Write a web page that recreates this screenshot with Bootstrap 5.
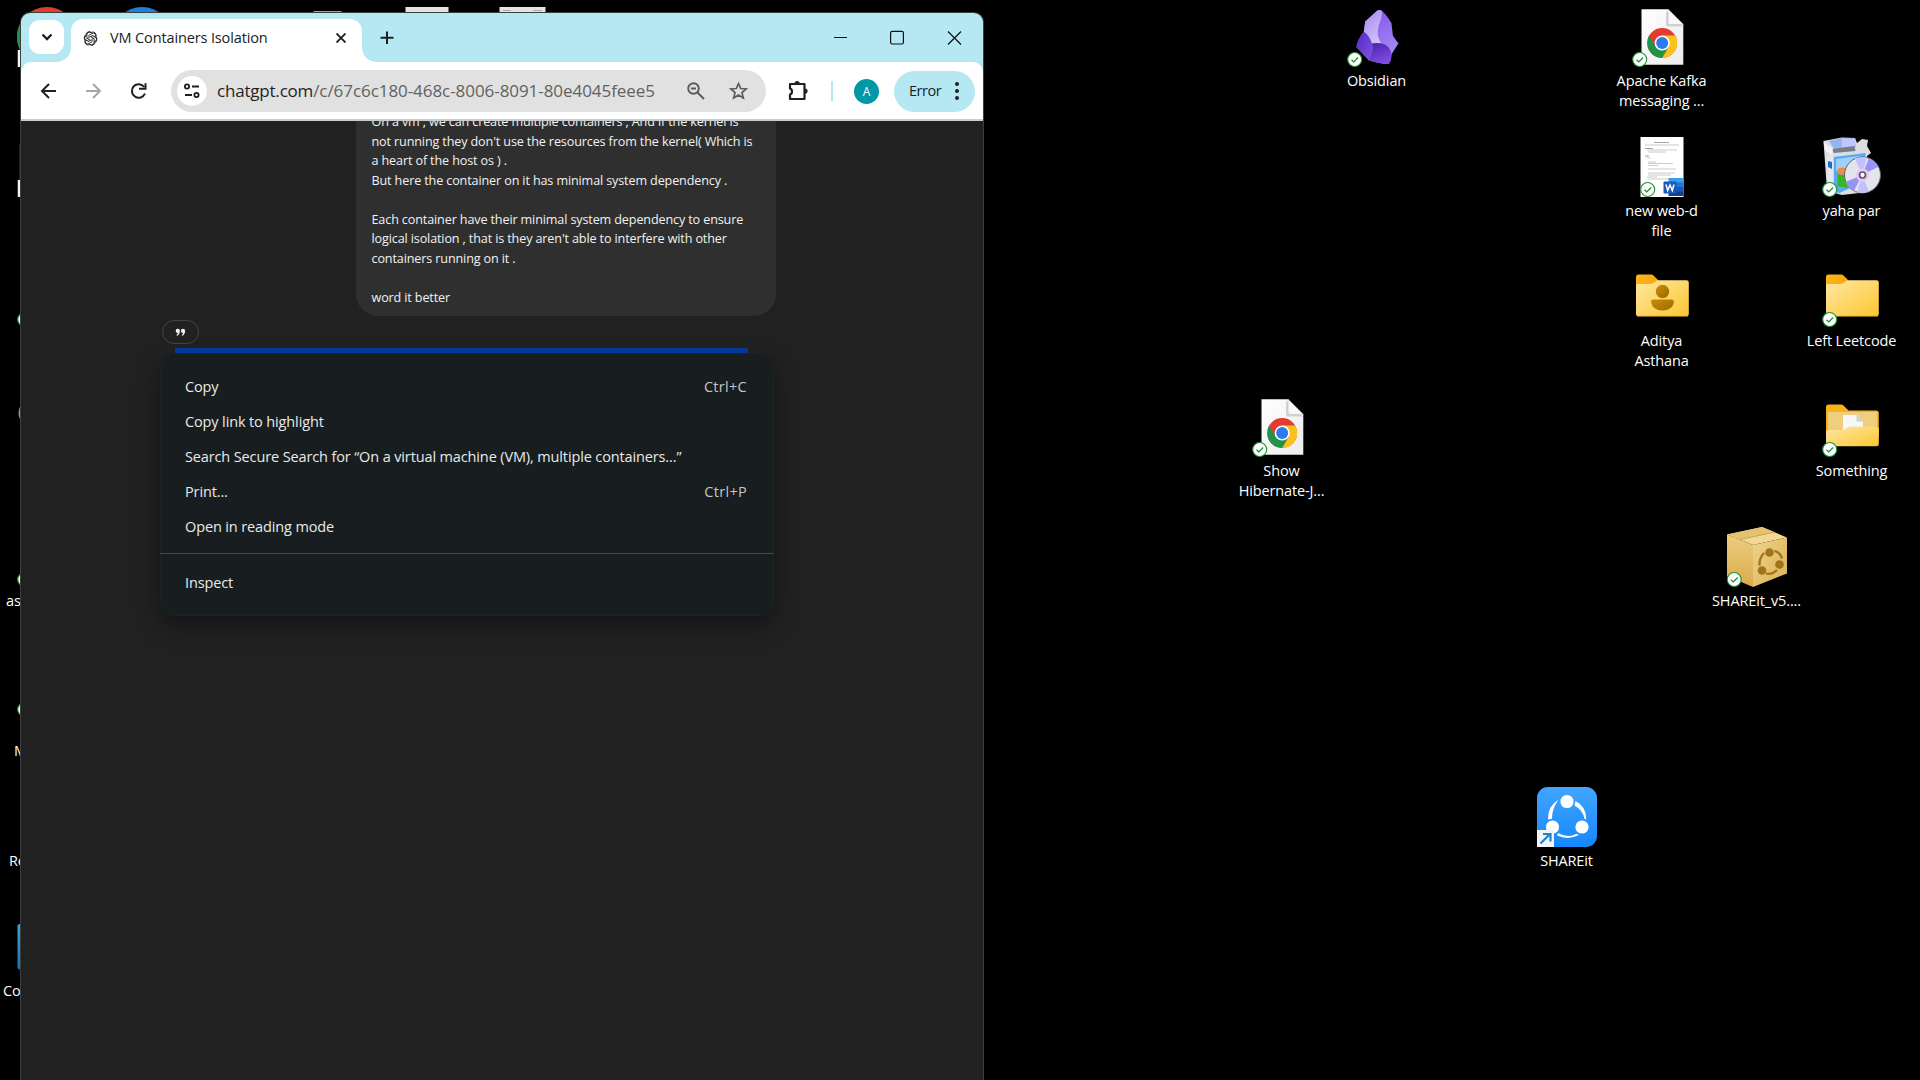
<!DOCTYPE html>
<html lang="en">
<head>
<meta charset="utf-8">
<title>Desktop</title>
<link rel="stylesheet" href="https://cdn.jsdelivr.net/npm/bootstrap@5.3.0/dist/css/bootstrap.min.css">
<style>
  html, body { height: 100%; }
  body { background: #000; font-family: "Open Sans", "Noto Sans", sans-serif; font-size: 14.5px; letter-spacing: -.13px; width: 1920px; height: 1080px; }
  svg { display: block; flex: none; }

  /* desktop grid: 95px by 130px cells */
  .desk-grid { display: grid; grid-template-columns: repeat(20, 95px); grid-template-rows: repeat(8, 130px); margin-left: -1px; padding-top: 7px; color: #fff; height: 1080px; }
  .desk-icon { display: flex; flex-direction: column; align-items: center; text-align: center; line-height: 20px; white-space: nowrap; }
  .desk-icon > svg { width: 60px; height: 60px; overflow: visible; margin-bottom: 4px; }
  .cut-label { align-self: flex-start; }
  .pad-as { padding-left: 7px; } .pad-m { padding: 20px 0 0 15px; } .pad-re { padding-left: 10px; } .pad-co { padding-left: 4px; }
  .c0{grid-column:1}.c1{grid-column:2}.c3{grid-column:4}.c4{grid-column:5}.c5{grid-column:6}
  .c13{grid-column:14}.c14{grid-column:15}.c16{grid-column:17}.c17{grid-column:18}.c18{grid-column:19}.c19{grid-column:20}
  .r0{grid-row:1}.r1{grid-row:2}.r2{grid-row:3}.r3{grid-row:4}.r4{grid-row:5}.r5{grid-row:6}.r6{grid-row:7}.r7{grid-row:8}

  /* browser window */
  .browser { left: 20px; top: 12px; width: 964px; height: 1068px; background: #212121; border: 1px solid #3c3f40; border-bottom: 0; border-radius: 10px 10px 0 0; }
  .tabstrip { background: #b5e8f3; height: 49px; flex: none; padding: 7px 0 0 8px; }
  .tab-search { width: 35px; height: 34px; border-radius: 11px; }
  .active-tab { position: relative; width: 291px; height: 43px; margin: -1px 0 0 7px; border-radius: 12px 12px 0 0; padding: 0 12px 5px 12px; color: #202124; }
  .active-tab::before, .active-tab::after { content: ""; position: absolute; bottom: 0; width: 14px; height: 14px; }
  .active-tab::before { left: -14px; background: radial-gradient(circle at 0 0, transparent 13.5px, #fff 14px); }
  .active-tab::after { right: -14px; background: radial-gradient(circle at 100% 0, transparent 13.5px, #fff 14px); }
  .caption-btns { margin-right: 1px; }
  .toolbar-wrap { background: #b5e8f3; flex: none; }
  .toolbar { background: #fff; height: 59px; border-bottom: 2px solid #c9cdcd; border-radius: 10px 10px 0 0; padding: 8px 8px 7px 16px; }
  .omnibox { width: 595px; height: 42px; margin-left: 20px; border-radius: 21px; background: #e1e1e1; padding: 0 18px 0 6px; }
  .site-info { width: 30px; height: 30px; border-radius: 50%; }
  .url { font-size: 17px; letter-spacing: -.06px; color: #5f6163; margin-left: 10px; }
  .url b { font-weight: 400; color: #1f1f1f; letter-spacing: -.2px; }
  .tool-divider { width: 2px; height: 20px; background: #b5e8f3; margin: 0 21px 0 20px; }
  .avatar { width: 25px; height: 25px; border-radius: 50%; background: #0097a7; color: #fff; font-size: 12px; line-height: 25px; margin-right: 15px; }
  .error-pill { width: 81px; height: 41px; border-radius: 21px; background: #b5e8f3; color: #202124; padding: 0 16px 0 15px; letter-spacing: -.45px; }

  /* page */
  .chat-page { padding-left: 141px; }
  .message { width: 420px; height: 195px; margin-left: 193.500px; border-radius: 0 0 22px 22px; background: #2f2f2f; color: #f2f2f2; font-size: 12.6px; line-height: 19.5px; padding: 0 16px 9px; white-space: pre; }
  .quote-btn { width: 37px; height: 24px; margin-top: 4px; border: 1px solid #444; border-radius: 12px; background: #212121; }
  .selection { width: 573px; height: 8px; margin: 3.5px 0 0 13px; background: #063a9f; }
  .ctx-menu { left: 139px; top: 340px; width: 614px; height: 263px; border-radius: 15px; box-shadow: 0 0 0 1px #1d2224 inset, 0 10px 22px rgba(0,0,0,.38); background: #181d1f; color: #e8eaea; padding: 16px 0; }
  .ctx-item { height: 35px; padding: 0 27px 0 25px; }
  .ctx-rule { height: 1px; background: #3e4f52; margin: 9px 0 11px; }
  .shortcut { color: #c3c7c7; letter-spacing: .3px; }
</style>
<script src="https://cdn.jsdelivr.net/npm/bootstrap@5.3.0/dist/js/bootstrap.bundle.min.js"></script>
</head>
<body class="position-relative overflow-hidden">

<svg width="0" height="0" class="position-absolute">
  <defs>
    <linearGradient id="fold" x1="0" y1="0" x2="1" y2="1"><stop offset="0" stop-color="#ffe7a2"/><stop offset="1" stop-color="#fdc732"/></linearGradient>
    <linearGradient id="foldTab" x1="0" y1="0" x2="1" y2="0"><stop offset="0" stop-color="#fcb51a"/><stop offset="1" stop-color="#f5a80c"/></linearGradient>
    <linearGradient id="person" x1="0" y1="0" x2="1" y2="1"><stop offset="0" stop-color="#c98f05"/><stop offset="1" stop-color="#9c6900"/></linearGradient>
    <linearGradient id="share" x1="0" y1="0" x2="0" y2="1"><stop offset="0" stop-color="#42a5ff"/><stop offset="1" stop-color="#1687fb"/></linearGradient>
    <linearGradient id="obsA" x1="0" y1="0" x2=".6" y2="1"><stop offset="0" stop-color="#a286ef"/><stop offset="1" stop-color="#cfc0fa"/></linearGradient>
    <linearGradient id="obsB" x1="0" y1="0" x2=".5" y2="1"><stop offset="0" stop-color="#7849e8"/><stop offset="1" stop-color="#a68cf3"/></linearGradient>
    <linearGradient id="obsC" x1="0" y1="0" x2="1" y2="1"><stop offset="0" stop-color="#5727c4"/><stop offset="1" stop-color="#7d53e0"/></linearGradient>
    <linearGradient id="obsD" x1="0" y1="0" x2=".4" y2="1"><stop offset="0" stop-color="#4c20a8"/><stop offset="1" stop-color="#7c4be0"/></linearGradient>
    <linearGradient id="paper" x1="0" y1="0" x2="1" y2="1"><stop offset="0" stop-color="#fff"/><stop offset="1" stop-color="#ececec"/></linearGradient>
    <linearGradient id="teal" x1="0" y1="0" x2="0" y2="1"><stop offset="0" stop-color="#3aa6cc"/><stop offset="1" stop-color="#1473bf"/></linearGradient>
    <linearGradient id="boxL" x1="0" y1="0" x2="0" y2="1"><stop offset="0" stop-color="#edcd80"/><stop offset="1" stop-color="#d9ab4c"/></linearGradient>
    <linearGradient id="boxR" x1="0" y1="0" x2="1" y2="1"><stop offset="0" stop-color="#f0d48a"/><stop offset="1" stop-color="#d8b152"/></linearGradient>
    <symbol id="ok" viewBox="0 0 16 16" width="16" height="16"><circle cx="7.700" cy="8" r="7" fill="#fff" stroke="#1c8f33" stroke-width="1.1"/><path d="M4.500 8.200l2.300 2.200 4.300-4.400" fill="none" stroke="#1c8f33" stroke-width="1.300"/></symbol>
    <symbol id="chrome" viewBox="0 0 30 30">
      <circle cx="15" cy="15" r="15" fill="#e33b2e"/>
      <path d="M2 7.5 A15 15 0 0 0 15 30 L21.5 18.7 L8.5 18.7Z" fill="#219348"/>
      <path d="M28 7.5 A15 15 0 0 1 15 30 L21.5 18.7 L15 7.5Z" fill="#fbc21b"/>
      <circle cx="15" cy="15" r="7.6" fill="#fff"/><circle cx="15" cy="15" r="6" fill="#2a7bee"/>
    </symbol>
    <symbol id="chromeDoc" viewBox="0 0 60 60">
      <path d="M9.500 2.200H36l15.300 15.300V57.800H9.500z" fill="url(#paper)"/>
      <path d="M34 4v13.500q0 2 2 2h15z" fill="#bbb" opacity=".6"/>
      <path d="M36 2.200v13.300q0 2 2 2h13.300z" fill="#f7f7f7" stroke="#bdbdbd" stroke-width=".6"/>
      <use href="#chrome" x="15.200" y="21" width="30" height="30"/>
      <use href="#ok" x="0" y="44.500" width="16" height="16"/>
    </symbol>
    <symbol id="folder" viewBox="0 0 60 60">
      <path d="M4 10q0-2.500 2.500-2.500H19q1.500 0 2.500 1l5 5V22H4z" fill="url(#foldTab)"/>
      <path d="M4 19q0-2 2-2h12q3 0 5-2l1-1q1-.8 2.500-.8H54.500q2.300 0 2.300 2.300V47q0 2.300-2.300 2.300H6.300Q4 49.300 4 47z" fill="url(#fold)"/>
      <path d="M5 49.200h51" stroke="#c99722" stroke-width=".8"/>
    </symbol>
    <symbol id="arrow" viewBox="0 0 17 17"><rect width="17" height="17" fill="#f4f4f4"/><path d="M3.500 13.500l8.500-8.500M6 4h7.500v7.500" fill="none" stroke="#1b83c9" stroke-width="2.200"/></symbol>
  </defs>
</svg>

<main class="desk-grid">
  <div class="desk-icon c0 r0"><svg viewBox="0 0 60 60"><use href="#chrome" width="60" height="60"/><use href="#arrow" x=".500" y="43" width="17" height="17"/></svg></div>
  <div class="desk-icon c1 r0"><svg viewBox="0 0 60 60"><circle cx="30" cy="30" r="30" fill="#1b82dc"/></svg></div>
  <div class="desk-icon c3 r0"><svg viewBox="0 0 60 60"><path d="M11.500 4h28v50h-28z" fill="#a89c9a"/></svg></div>
  <div class="desk-icon c4 r0"><svg viewBox="0 0 60 60"><path d="M8.500 0h43v60h-43z" fill="#e4e4e4"/><path d="M23 5.500h9" stroke="#bbb" stroke-width="1"/></svg></div>
  <div class="desk-icon c5 r0"><svg viewBox="0 0 60 60"><path d="M7.500 0h46v60h-46z" fill="#e4e4e4"/><path d="M11 3.500h8M41 3.500h9" stroke="#aaa"/></svg></div>

  <div class="desk-icon c0 r1"><svg viewBox="0 0 60 60"><rect x="2.500" y="3" width="55" height="54" rx="6" fill="#b7170e"/><use href="#arrow" x=".500" y="43" width="17" height="17"/></svg></div>
  <div class="desk-icon c0 r2"><svg viewBox="0 0 60 60"><use href="#folder" width="60" height="60"/><use href="#ok" x="0" y="44.500"/></svg></div>
  <div class="desk-icon c0 r3"><svg viewBox="0 0 60 60"><circle cx="15" cy="16" r="13.500" fill="#5fa3c2"/></svg></div>
  <div class="desk-icon c0 r4"><svg viewBox="0 0 60 60"><use href="#folder" width="60" height="60"/><use href="#ok" x="0" y="44.500"/></svg><span class="cut-label pad-as">as</span></div>
  <div class="desk-icon c0 r5"><svg viewBox="0 0 60 60"><use href="#ok" x="0" y="44.500"/></svg><span class="cut-label pad-m">M</span></div>
  <div class="desk-icon c0 r6"><svg viewBox="0 0 60 60"></svg><span class="cut-label pad-re">Re</span></div>
  <div class="desk-icon c0 r7"><svg viewBox="0 0 60 60"><rect x=".500" y="7" width="59" height="45.500" rx="2" fill="url(#teal)"/></svg><span class="cut-label pad-co">Co</span></div>

  <div class="desk-icon c14 r0">
    <svg viewBox="0 0 60 60">
      <path d="M16.800 24.700Q9.500 34 9.500 40.300L21.800 53.300Q36 57.500 41 57Q44 56 44.500 47.300L51.500 36.300Q47 31 45.800 28L44.500 16Q38 6 34.500 3.600Q32 2 29.500 4.300L18.200 14.500Z" fill="url(#obsB)"/>
      <path d="M29.500 4.300Q32 2 34.500 3.600Q36 8 32 18Q28.500 28 34 36L25 36.500Q22 29 16.800 24.700L18.200 14.500Z" fill="url(#obsA)"/>
      <path d="M16.800 24.700Q9.500 34 9.500 40.300L21.800 53.300Q27 43 24.500 35.500Q22 28 16.800 24.700Z" fill="url(#obsC)"/>
      <path d="M25 36.500Q27 43 21.800 53.300Q36 57.500 41 57Q44 56 44.500 47.300Q42 34 25 36.500Z" fill="url(#obsD)"/>
      <use href="#ok" x="0" y="44.500"/>
    </svg>Obsidian
  </div>
  <div class="desk-icon c17 r0"><svg><use href="#chromeDoc" width="60" height="60"/></svg>Apache Kafka<br>messaging ...</div>
  <div class="desk-icon c17 r1">
    <svg viewBox="0 0 60 60">
      <path d="M8.500 0h43v60h-43z" fill="#fff"/>
      <g fill="none" stroke="#aaa" stroke-width=".600"><path d="M22 5.500h15" stroke="#666"/><path d="M13 11.500h8M13 19h4" stroke="#666"/><path d="M13 8h34M15 13h30M16 15h18M15 21h4M16 25h8M16 26.500h25M16 28.500h10M16 32h28M16 36h27M16 38h23M15 40h10M16 42h24"/></g>
      <path d="M36.500 41H51.500V46H36.500z" fill="#36a0ec"/><path d="M36.500 45.500h15v5h-15z" fill="#2477d0"/><path d="M36.500 50h15v5h-15z" fill="#1758b9"/><path d="M36.500 54.500h15v4.500h-15z" fill="#103f91"/>
      <rect x="31.500" y="44.500" width="13" height="12" rx="1" fill="#1c58bb"/>
      <path d="M34 47.500l1.700 6L38 48l2.300 5.500 1.700-6" fill="none" stroke="#fff" stroke-width="1.500"/>
      <use href="#ok" x="8" y="44.500"/>
    </svg>new web-d<br>file
  </div>
  <div class="desk-icon c19 r1">
    <svg viewBox="0 0 60 60">
      <path d="M1.500 4L20 .500 33 1l2 5 5-4 6 1-1 6 4 7-4 3 1 36-26 3-15-4z" fill="#dcdee2"/>
      <path d="M7 4L20 1h12l2 9-22 2z" fill="#8fb6ee"/><path d="M20 1.500h12l1.500 8-14 1z" fill="#c3c5fa"/>
      <path d="M10.500 12l22-3 1 5-22 2z" fill="#777e8b"/>
      <path d="M1.500 5l9 7v7l-7-5z" fill="#f1f2f4"/>
      <path d="M11.500 20l32-4v28l-26 12-6-1z" fill="#5aa9f2"/><path d="M14 22l24-3v10l-24 5z" fill="#9ed0fa"/>
      <path d="M5 18l6.500 2v36L6 53z" fill="#e6e8ec"/><path d="M6 24l4 1v7l-4-2z" fill="#1270d8"/>
      <path d="M15.500 32q5-3 9 0v6l-9-1z" fill="#f58a38"/><path d="M15.500 37q5 2 10 1v13l-10-2z" fill="#35b81e"/>
      <circle cx="40.500" cy="38" r="18" fill="#e4e4ef" stroke="#60636f" stroke-width="1"/>
      <path d="M40 38L33 21.500A18 18 0 0 1 45 20.500zM40 38L47 54.500A18 18 0 0 1 35 55.500z" fill="#c3c1fb"/><path d="M40 38L47 21.300A18 18 0 0 1 56 30zM40 38L23.500 45A18 18 0 0 0 32 54z" fill="#9695f6"/>
      <circle cx="40.500" cy="38" r="6.500" fill="#eec6ef"/><circle cx="40.500" cy="38" r="3" fill="#fff" stroke="#555a78" stroke-width="1.700"/>
      <use href="#ok" x="0" y="44.500"/>
    </svg>yaha par
  </div>
  <div class="desk-icon c17 r2">
    <svg viewBox="0 0 60 60"><use href="#folder" width="60" height="60"/><circle cx="30.500" cy="24.500" r="6.700" fill="url(#person)"/><path d="M19 35q0-2.500 2.500-2.500h18q2.500 0 2.500 2.500q-1.500 8.500-11.500 8.500T19 35z" fill="url(#person)"/></svg>Aditya<br>Asthana
  </div>
  <div class="desk-icon c19 r2"><svg viewBox="0 0 60 60"><use href="#folder" width="60" height="60"/><use href="#ok" x="0" y="44.500"/></svg>Left Leetcode</div>
  <div class="desk-icon c13 r3"><svg><use href="#chromeDoc" width="60" height="60"/></svg>Show<br>Hibernate-J...</div>
  <div class="desk-icon c19 r3">
    <svg viewBox="0 0 60 60">
      <path d="M4 10q0-2.500 2.500-2.500H19q1.500 0 2.500 1l5 5H54q2.800 0 2.800 2.500V40H4z" fill="#f7b11b"/>
      <path d="M6 15h49v22H6z" fill="#efcf7e"/>
      <path d="M21 18h13.500l6.500 6.500V40H21z" fill="#f7f7f7"/><path d="M34.500 18v6.500H41z" fill="#d2d2d2"/>
      <path d="M4 35q0-2 2-2h13q3 0 5-1.500l1.500-1q1.200-.8 2.500-.8H54.500q2.300 0 2.300 2V47q0 2.300-2.300 2.300H6.300Q4 49.300 4 47z" fill="url(#fold)"/>
      <use href="#ok" x="0" y="44.500"/>
    </svg>Something
  </div>
  <div class="desk-icon c18 r4">
    <svg viewBox="0 0 60 60">
      <path d="M0 7.500L35 0 60 10.500 26 18z" fill="#f3d893"/><path d="M0 7.500l13 5 35-7.300L35 0z" fill="#e5c270"/><path d="M13 12.500L48 5.200" stroke="#b9954a" stroke-width=".700"/>
      <path d="M0 7.500L26 18v42L0 49z" fill="url(#boxL)"/><path d="M26 18l34-7.500V46.500L26 60z" fill="url(#boxR)"/>
      <g fill="#a1741a"><circle cx="42.500" cy="25.500" r="4.300"/><circle cx="35" cy="43.500" r="4.300"/><circle cx="52.500" cy="37.500" r="4.300"/></g>
      <g fill="none" stroke="#a1741a" stroke-width="2.300"><path d="M37 26q-5 5.500-4.500 12.500M47.500 24q6 1.500 7.500 7.500M39 46.500q6 1.500 11-3.500"/></g>
      <use href="#ok" x="-.500" y="44.500"/>
    </svg>SHAREit_v5....
  </div>
  <div class="desk-icon c16 r6">
    <svg viewBox="0 0 60 60">
      <rect width="60" height="60" rx="11" fill="url(#share)"/>
      <g fill="#fff"><circle cx="30" cy="14.500" r="6.600"/><circle cx="15.500" cy="40" r="6.600"/><circle cx="45" cy="40" r="6.600"/>
      <path d="M21.500 12.700Q10.500 19 11 32.500L15 31.800Q15 21 21.500 12.700zM38.500 14Q49.500 19.500 49.300 32.500L47.500 32Q46 23 37.500 18.500zM21 46Q31 51.500 39.500 46.700L42 48Q31 53.500 20 48.500z"/></g>
      <use href="#arrow" x="0" y="43" width="17" height="17"/>
    </svg>SHAREit
  </div>
</main>

<section class="browser position-absolute overflow-hidden d-flex flex-column">
  <div class="tabstrip d-flex align-items-start">
    <div class="tab-search bg-white d-flex align-items-center justify-content-center"><svg width="12" height="8" fill="none" stroke="#1f1f1f" stroke-width="2.300"><path d="M1.500 1.500L6 6l4.500-4.500"/></svg></div>
    <div class="active-tab bg-white d-flex align-items-center">
      <svg width="15" height="15" viewBox="0 0 24 24" fill="none" stroke="#222" stroke-width="1.500">
        <path id="petal" d="M9.500 12V6.800l4.800-2.800a4.300 4.300 0 0 1 6.200 5"/>
        <use href="#petal" transform="rotate(60 12 12)"/><use href="#petal" transform="rotate(120 12 12)"/><use href="#petal" transform="rotate(180 12 12)"/><use href="#petal" transform="rotate(240 12 12)"/><use href="#petal" transform="rotate(300 12 12)"/>
        <path d="M5 8a5 5 0 0 1 8-5.500M13 2.500a5 5 0 0 1 7.500 6M20.500 8.500a5 5 0 0 1-1.500 8M19 16a5 5 0 0 1-8 5.500M11 21.500a5 5 0 0 1-7.500-6M3.500 15.500a5 5 0 0 1 1.500-7.500"/>
      </svg>
      <span class="ms-2 ps-1">VM Containers Isolation</span>
      <svg class="ms-auto me-1" width="10" height="10" stroke="#1f1f1f" stroke-width="1.900"><path d="M.500.500l9 9M9.500.500l-9 9"/></svg>
    </div>
    <svg class="mt-2 ms-3 me-auto" width="19" height="20" stroke="#1f1f1f" stroke-width="2"><path d="M9 3.500v12.500M2.500 9.750h13"/></svg>
    <svg class="caption-btns" width="160" height="36" fill="none" stroke="#111" stroke-width="1.200"><path d="M12 17.500h13"/><rect x="68.600" y="11.400" width="12.800" height="12.600" rx="1.500"/><path d="M126 11.500l13 13M139 11.500l-13 13"/></svg>
  </div>
  <div class="toolbar-wrap">
    <div class="toolbar d-flex align-items-center">
      <svg width="114" height="24" fill="none" stroke="#202124" stroke-width="2">
        <path d="M19 12H5.500M12 5L5 12l7 7"/>
        <path d="M49 12h13.500M56 5l7 7-7 7" stroke="#a6a6a6"/>
        <path d="M107.200 8A6.800 6.800 0 1 0 108 14.500"/><path d="M108.500 4.200v5.500H102"/>
      </svg>
      <div class="omnibox d-flex align-items-center">
        <div class="site-info bg-white d-flex align-items-center justify-content-center"><svg width="18" height="16" fill="none" stroke="#1f1f1f" stroke-width="1.800"><circle cx="4" cy="3.500" r="2.100"/><path d="M9 3.500h7"/><circle cx="13.500" cy="12" r="2.100"/><path d="M2 12h7"/></svg></div>
        <span class="url me-auto"><b>chatgpt.com</b>/c/67c6c180-468c-8006-8091-80e4045feee5</span>
        <svg width="62" height="22" fill="none" stroke="#5a5c5e" stroke-width="1.900"><circle cx="7.500" cy="8.500" r="5.300"/><path d="M5 8.500h5M11.500 12.500l6.500 6.500"/><path transform="translate(3.500 0)" d="M49 3.500l2.200 5 5.500.500-4.200 3.600 1.300 5.400-4.800-2.900-4.800 2.900 1.300-5.400-4.200-3.600 5.500-.500z" stroke-width="1.700"/></svg>
      </div>
      <svg width="26" height="24" class="ms-auto" fill="none" stroke="#202124" stroke-width="2.200"><path d="M5 5h14.500v15H5v-4.500q2-.500 2-3t-2-3z" stroke-linejoin="round"/><path d="M9.500 4.500a2.600 2.600 0 0 1 5.200 0zM20 9.500a2.600 2.600 0 0 1 0 5.200z" fill="#202124" stroke="none"/></svg>
      <div class="tool-divider"></div>
      <div class="avatar text-center">A</div>
      <div class="error-pill d-flex align-items-center justify-content-between"><span>Error</span><svg width="4" height="18" fill="#202124"><circle cx="2" cy="2" r="2"/><circle cx="2" cy="9" r="2"/><circle cx="2" cy="16" r="2"/></svg></div>
    </div>
  </div>

  <div class="chat-page flex-grow-1 overflow-hidden">
    <div class="message d-flex flex-column justify-content-end">On a vm , we can create multiple containers , And if the kernel is
not running they don't use the resources from the kernel( Which is
a heart of the host os ) .
But here the container on it has minimal system dependency .

Each container have their minimal system dependency to ensure
logical isolation , that is they aren't able to interfere with other
containers running on it .

word it better</div>
    <div class="quote-btn d-flex align-items-center justify-content-center"><svg width="11" height="9" viewBox="0 0 12 10" fill="#f0f0f0"><path id="q" d="M3 .8a2.300 2.300 0 0 1 2.300 2.500c0 2.600-1.200 4.600-3.300 5.400l-.500-1c1-.500 1.500-1.200 1.600-2.100A2.300 2.300 0 1 1 3 .8z"/><use href="#q" x="5.800"/></svg></div>
    <div class="selection"></div>
  </div>

  <div class="ctx-menu position-absolute">
    <div class="ctx-item d-flex align-items-center justify-content-between"><span>Copy</span><span class="shortcut">Ctrl+C</span></div>
    <div class="ctx-item d-flex align-items-center"><span>Copy link to highlight</span></div>
    <div class="ctx-item d-flex align-items-center"><span>Search Secure Search for “On a virtual machine (VM), multiple containers...”</span></div>
    <div class="ctx-item d-flex align-items-center justify-content-between"><span>Print...</span><span class="shortcut">Ctrl+P</span></div>
    <div class="ctx-item d-flex align-items-center"><span>Open in reading mode</span></div>
    <div class="ctx-rule"></div>
    <div class="ctx-item d-flex align-items-center"><span>Inspect</span></div>
  </div>
</section>
</body>
</html>
